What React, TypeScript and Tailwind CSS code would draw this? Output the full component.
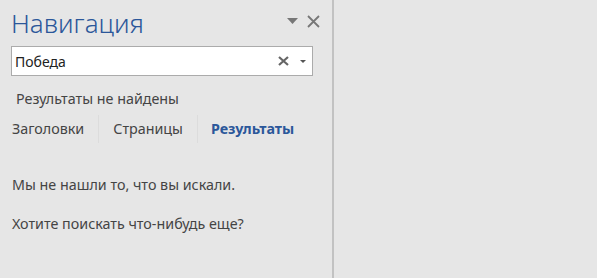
import React from "react";

export default function App() {
  const font = { fontFamily: '"Noto Sans", "Open Sans", sans-serif' };
  return (
    <div className="w-[597px] h-[278px] bg-[#e6e6e6] flex overflow-hidden" style={font}>
      <div className="w-[332px] h-full flex flex-col">
        <div className="flex items-start justify-between pl-[11px] pr-[12px] pt-[6px] h-[46px]">
          <div className="text-[26px] leading-[34px] font-light text-[#2b579a]">Навигация</div>
          <div className="flex items-center gap-[9px] pt-[9px]">
            <svg width="11" height="7" viewBox="0 0 11 7"><path d="M0 0 H11 L5.5 6 Z" fill="#777" /></svg>
            <svg width="13" height="13" viewBox="0 0 13 13"><path d="M1 1 L12 12 M12 1 L1 12" stroke="#777" strokeWidth="1.8" /></svg>
          </div>
        </div>
        <div className="ml-[11px] w-[302px] h-[30px] bg-white border border-[#ababab] flex items-center pl-[3px] pr-[6px]">
          <span className="text-[14px] text-[#222] flex-1">Победа</span>
          <svg width="11" height="10" viewBox="0 0 11 10" className="mr-[11px]"><path d="M1 1 L10 9 M10 1 L1 9" stroke="#666" strokeWidth="2.2" /></svg>
          <svg width="6" height="3" viewBox="0 0 6 3"><path d="M0 0 H6 L3 3 Z" fill="#555" /></svg>
        </div>
        <div className="pl-[16px] pt-[13px] text-[14.3px] text-[#444] leading-[20px]">Результаты не найдены</div>
        <div className="flex items-stretch pl-[12px] mt-[6px] h-[28px] text-[14.3px] leading-[20px]">
          <div className="pr-[14px] flex items-center text-[#444]">Заголовки</div>
          <div className="w-px bg-[#dcdcdc]" />
          <div className="px-[14px] flex items-center text-[#444]">Страницы</div>
          <div className="w-px bg-[#dcdcdc]" />
          <div className="px-[13px] flex items-center font-bold text-[#2b579a]">Результаты</div>
        </div>
        <div className="pl-[12px] pt-[32px] text-[14.3px] leading-[20px] text-[#444]">Мы не нашли то, что вы искали.</div>
        <div className="pl-[12px] pt-[19px] text-[14.3px] leading-[20px] text-[#444]">Хотите поискать что-нибудь еще?</div>
      </div>
      <div className="w-[2px] h-full bg-[#c2c2c2]" />
      <div className="flex-1" />
    </div>
  );
}
